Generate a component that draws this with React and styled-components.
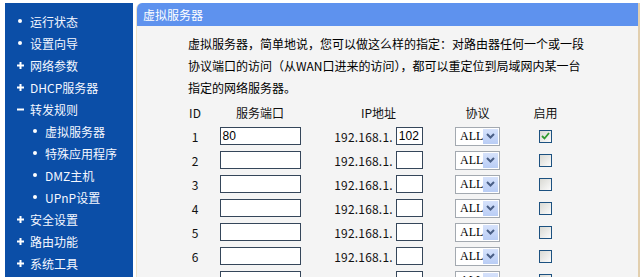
import React from "react";
import styled, { createGlobalStyle } from "styled-components";

const GlobalStyle = createGlobalStyle`
  body {
    margin: 0;
    background: #fff;
    font-family: "SimSun", "Noto Sans CJK SC", sans-serif;
    font-size: 12px;
  }
`;

const Page = styled.div`
  display: flex;
  align-items: flex-start;
  padding: 3px 0 0 5px;
  height: 274px;
  overflow: hidden;
`;

const Sidebar = styled.nav`
  width: 128px;
  min-height: 320px;
  padding-top: 7px;
  background: #0b4ea7;
  box-sizing: border-box;
`;

const MenuItem = styled.div`
  height: 22px;
  display: flex;
  align-items: center;
  padding-left: ${({ $sub }) => ($sub ? 27 : 12)}px;
  color: #f4f7ff;
  font-size: 12px;
  white-space: nowrap;
`;

const Marker = styled.span`
  width: 13px;
  height: 8px;
  display: flex;
  align-items: center;
  flex-shrink: 0;
`;

const Dot = styled.span`
  width: 4px;
  height: 4px;
  margin-left: 1px;
  border-radius: 50%;
  background: #fff;
`;

const Content = styled.main`
  margin-left: 3px;
  width: 501px;
  min-height: 320px;
  background: #f4f4f4;
  border-left: 1px solid #efe3c8;
  border-right: 2px solid #e2cfae;
  border-top-left-radius: 6px;
  overflow: hidden;
`;

const TitleBar = styled.div`
  height: 23px;
  line-height: 23px;
  padding-left: 6px;
  background: #5e92ee;
  color: #fff;
  font-size: 12px;
`;

const Intro = styled.p`
  margin: 7px 0 0 51px;
  width: 400px;
  line-height: 22px;
  color: #000;
`;

const Grid = styled.div`
  margin: 1px 0 0 43px;
  display: grid;
  grid-template-columns: 30px 100px 137px 61px 75px;
  grid-auto-rows: 24px;
  align-items: center;
  justify-items: center;
  color: #111;
`;

const HeadCell = styled.div`
  font-size: 12px;
`;

const Cell = styled.div`
  display: flex;
  align-items: center;
  gap: 3px;
`;

const TextBox = styled.div`
  width: ${({ $w }) => $w}px;
  height: 18px;
  box-sizing: border-box;
  border: 1px solid #35465a;
  background: #fff;
  padding-left: 2px;
  font-family: "Liberation Sans", Arial, sans-serif;
  font-size: 12px;
  line-height: 16px;
  color: #000;
`;

const IpPrefix = styled.span`
  letter-spacing: 0.2px;
`;

const Select = styled.div`
  width: 45px;
  height: 19px;
  box-sizing: border-box;
  border: 1px solid #a3a9b0;
  background: #fff;
  display: flex;
  align-items: stretch;
  padding: 1px;
`;

const SelectText = styled.span`
  flex: 1;
  padding-left: 3px;
  line-height: 15px;
  font-family: "Liberation Serif", serif;
  font-size: 12px;
  color: #000;
`;

const SelectArrow = styled.span`
  width: 17px;
  display: flex;
  align-items: center;
  justify-content: center;
  background: linear-gradient(180deg, #d6e2fb, #b9cdf5);
`;

const Check = styled.span`
  width: 13px;
  height: 13px;
  box-sizing: border-box;
  border: 1px solid #1c5180;
  background: linear-gradient(135deg, #d9d9d3, #fbfbfb);
  display: flex;
  align-items: center;
  justify-content: center;
`;

const menu = [
  { label: "运行状态", mark: "dot" },
  { label: "设置向导", mark: "dot" },
  { label: "网络参数", mark: "plus" },
  { label: "DHCP服务器", mark: "plus" },
  { label: "转发规则", mark: "minus" },
  { label: "虚拟服务器", mark: "dot", sub: true },
  { label: "特殊应用程序", mark: "dot", sub: true },
  { label: "DMZ主机", mark: "dot", sub: true },
  { label: "UPnP设置", mark: "dot", sub: true },
  { label: "安全设置", mark: "plus" },
  { label: "路由功能", mark: "plus" },
  { label: "系统工具", mark: "plus" },
];

const rows = [
  { id: 1, port: "80", ip: "102", on: true },
  { id: 2 },
  { id: 3 },
  { id: 4 },
  { id: 5 },
  { id: 6 },
  { id: 7 },
];

const MarkIcon = ({ mark }) => {
  if (mark === "dot") return <Dot />;
  return (
    <svg width="7" height="7" viewBox="0 0 7 7">
      <path d="M0 3.5h7" stroke="#fff" strokeWidth="2" />
      {mark === "plus" && <path d="M3.5 0v7" stroke="#fff" strokeWidth="2" />}
    </svg>
  );
};

const Chevron = () => (
  <svg width="9" height="6" viewBox="0 0 9 6">
    <path d="M1 1l3.5 3.5L8 1" fill="none" stroke="#4a5f86" strokeWidth="2" />
  </svg>
);

const Tick = () => (
  <svg width="9" height="8" viewBox="0 0 9 8">
    <path d="M1 4l2.5 2.5L8 1" fill="none" stroke="#2f9a2f" strokeWidth="1.8" />
  </svg>
);

export default function App() {
  return (
    <>
      <GlobalStyle />
      <Page>
        <Sidebar>
          {menu.map((m) => (
            <MenuItem key={m.label} $sub={m.sub}>
              <Marker>
                <MarkIcon mark={m.mark} />
              </Marker>
              {m.label}
            </MenuItem>
          ))}
        </Sidebar>
        <Content>
          <TitleBar>虚拟服务器</TitleBar>
          <Intro>
            虚拟服务器，简单地说，您可以做这么样的指定：对路由器任何一个或一段
            协议端口的访问（从WAN口进来的访问），都可以重定位到局域网内某一台
            指定的网络服务器。
          </Intro>
          <Grid>
            <HeadCell>ID</HeadCell>
            <HeadCell>服务端口</HeadCell>
            <HeadCell>IP地址</HeadCell>
            <HeadCell>协议</HeadCell>
            <HeadCell>启用</HeadCell>
            {rows.map((r) => (
              <React.Fragment key={r.id}>
                <Cell>{r.id}</Cell>
                <Cell>
                  <TextBox $w={81}>{r.port}</TextBox>
                </Cell>
                <Cell>
                  <IpPrefix>192.168.1.</IpPrefix>
                  <TextBox $w={27}>{r.ip}</TextBox>
                </Cell>
                <Cell>
                  <Select>
                    <SelectText>ALL</SelectText>
                    <SelectArrow>
                      <Chevron />
                    </SelectArrow>
                  </Select>
                </Cell>
                <Cell>
                  <Check>{r.on && <Tick />}</Check>
                </Cell>
              </React.Fragment>
            ))}
          </Grid>
        </Content>
      </Page>
    </>
  );
}
